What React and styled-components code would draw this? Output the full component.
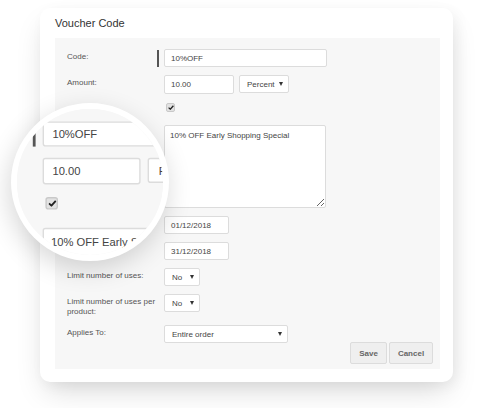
import React from "react";
import styled, { createGlobalStyle } from "styled-components";

const GlobalStyle = createGlobalStyle`
  html, body {
    margin: 0;
    padding: 0;
    background: #fff;
  }
  body {
    font-family: "Liberation Sans", Arial, Helvetica, sans-serif;
  }
`;

const Page = styled.div`
  position: relative;
  width: 480px;
  height: 408px;
  box-sizing: border-box;
  padding: 8px 0 0 40px;
  background: #fff;
  overflow: hidden;
`;

const Card = styled.div`
  width: 413px;
  box-sizing: border-box;
  padding: 9px 13px 13px 15px;
  background: #fff;
  border-radius: 10px;
  box-shadow: 0 14px 30px -6px rgba(0, 0, 0, 0.15), 4px 4px 14px rgba(0, 0, 0, 0.05);
`;

const Title = styled.div`
  font-size: 11px;
  line-height: 13px;
  color: #333;
  margin-bottom: 8px;
`;

const Panel = styled.div`
  box-sizing: border-box;
  width: 385px;
  background: #f7f7f7;
  padding: 11px 7px 5px 12px;
  display: flex;
  flex-direction: column;
  gap: 8px;
`;

const Row = styled.div`
  display: grid;
  grid-template-columns: 92px 1fr;
  column-gap: 5px;
  align-items: start;
  min-height: ${(p) => p.$h || 0}px;
`;

const Label = styled.div`
  font-size: 8px;
  line-height: 10px;
  color: #555;
  padding-top: 3px;
`;

const Field = styled.div`
  position: relative;
  display: flex;
  align-items: flex-start;
  gap: 5px;

  ${(p) =>
    p.$marker &&
    `
    &::before {
      content: "";
      position: absolute;
      left: -7px;
      top: 1px;
      width: 2px;
      height: 17px;
      background: #555;
    }
  `}
`;

const Box = styled.div`
  width: ${(p) => p.$w}px;
  height: ${(p) => p.$h || 18}px;
  box-sizing: border-box;
  border: 1px solid #dcdcdc;
  border-radius: 2px;
  background: #fff;
  padding: 0 ${(p) => p.$pr || 6}px 0 ${(p) => p.$pl || 6}px;
  display: flex;
  align-items: center;
  justify-content: space-between;
  font-size: 8px;
  color: #444;
  white-space: nowrap;
`;

const Arrow = styled.span`
  width: 0;
  height: 0;
  border-left: 2.5px solid transparent;
  border-right: 2.5px solid transparent;
  border-top: 4px solid #333;
`;

const Area = styled.textarea`
  width: 162px;
  height: 83px;
  box-sizing: border-box;
  margin: 0;
  border: 1px solid #dcdcdc;
  border-radius: 2px;
  background: #fff;
  padding: 5px 5px;
  font-family: "Liberation Sans", Arial, sans-serif;
  font-size: 8px;
  color: #444;
  outline: none;
`;

const Check = styled.span`
  width: 9px;
  height: 9px;
  box-sizing: border-box;
  margin: 1px 0 0 2px;
  border: 1px solid #c9c9c9;
  border-radius: 2px;
  background: #e2e2e2;
  display: flex;
  align-items: center;
  justify-content: center;
`;

const ButtonRow = styled.div`
  display: flex;
  justify-content: flex-end;
  gap: 2px;
  margin-top: -9px;
`;

const Button = styled.div`
  width: ${(p) => p.$w}px;
  height: 22px;
  box-sizing: border-box;
  border: 1px solid #dcdcdc;
  border-radius: 2px;
  background: #efefef;
  color: #666;
  font-size: 8px;
  font-weight: bold;
  display: flex;
  align-items: center;
  justify-content: center;
`;

const Lens = styled.div`
  position: absolute;
  left: 11px;
  top: 103px;
  width: 158px;
  height: 158px;
  box-sizing: border-box;
  border-radius: 50%;
  border: 6px solid #fff;
  background: #f7f7f7;
  overflow: hidden;
  box-shadow: -2px 8px 26px rgba(0, 0, 0, 0.16);
`;

const Zoomed = styled.div`
  position: absolute;
  left: -126.6px;
  top: -3.4px;
  width: 385px;
  transform: scale(1.4);
  transform-origin: 0 0;
`;

const Select = ({ w, pl, children }) => (
  <Box $w={w} $pl={pl} $pr={5}>
    <span>{children}</span>
    <Arrow />
  </Box>
);

function VoucherForm() {
  return (
    <Panel>
      <Row>
        <Label>Code:</Label>
        <Field $marker>
          <Box $w={163}>10%OFF</Box>
        </Field>
      </Row>
      <Row>
        <Label>Amount:</Label>
        <Field>
          <Box $w={70} $h={19}>10.00</Box>
          <Select w={50} pl={7}>Percent</Select>
        </Field>
      </Row>
      <Row $h={15}>
        <Label />
        <Field>
          <Check>
            <svg width="6" height="5" viewBox="0 0 6 5">
              <path d="M0.6 2.6 L2.3 4.2 L5.4 0.7" fill="none" stroke="#222" strokeWidth="1.3" />
            </svg>
          </Check>
        </Field>
      </Row>
      <Row>
        <Label>Description:</Label>
        <Field>
          <Area readOnly value="10% OFF Early Shopping Special" />
        </Field>
      </Row>
      <Row>
        <Label>Start Date:</Label>
        <Field>
          <Box $w={65}>01/12/2018</Box>
        </Field>
      </Row>
      <Row>
        <Label>End Date:</Label>
        <Field>
          <Box $w={65}>31/12/2018</Box>
        </Field>
      </Row>
      <Row>
        <Label>Limit number of uses:</Label>
        <Field>
          <Select w={36} pl={7}>No</Select>
        </Field>
      </Row>
      <Row>
        <Label>Limit number of uses per product:</Label>
        <Field>
          <Select w={36} pl={7}>No</Select>
        </Field>
      </Row>
      <Row>
        <Label>Applies To:</Label>
        <Field>
          <Select w={124} pl={7}>Entire order</Select>
        </Field>
      </Row>
      <ButtonRow>
        <Button $w={37}>Save</Button>
        <Button $w={44}>Cancel</Button>
      </ButtonRow>
    </Panel>
  );
}

export default function App() {
  return (
    <Page>
      <GlobalStyle />
      <Card>
        <Title>Voucher Code</Title>
        <VoucherForm />
      </Card>
      <Lens>
        <Zoomed>
          <VoucherForm />
        </Zoomed>
      </Lens>
    </Page>
  );
}
